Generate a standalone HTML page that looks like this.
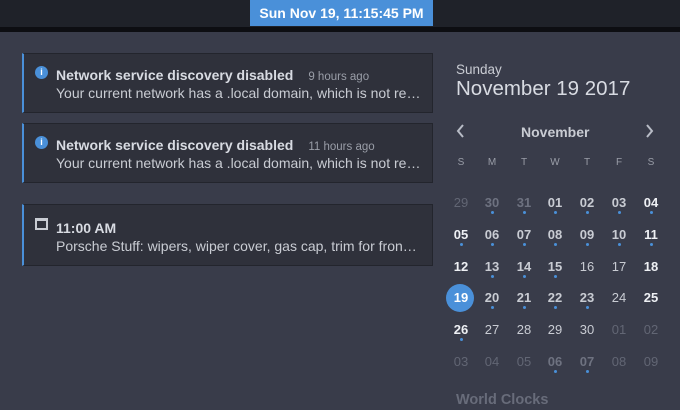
<!DOCTYPE html>
<html><head><style>
*{margin:0;padding:0;box-sizing:border-box}
body{width:680px;height:410px;overflow:hidden;background:#393c4a;font-family:"Liberation Sans",sans-serif;position:relative}
.top{position:absolute;left:0;top:0;width:680px;height:27px;background:#1f2229}
.gap{position:absolute;left:0;top:27px;width:680px;height:5px;background:#0d0e12}
.clock{position:absolute;left:250px;top:0;width:183px;height:26px;background:#4a90d9;color:#fff;font-weight:bold;font-size:14px;text-align:center;line-height:26px}
.card{position:absolute;left:22px;width:411px;background:#2f313b;border:1px solid #23252d;border-left:2px solid #4a90d9}
.card .t{position:absolute;left:32px;top:13px;color:#d8dbe2;font-weight:bold;font-size:14px;white-space:nowrap}
.card .t span{font-weight:normal;color:#9a9ea8;font-size:11.5px;margin-left:15px}
.card .b{position:absolute;left:32px;top:31px;color:#c9ccd3;font-size:14px;white-space:nowrap}
.ic{position:absolute;left:11px;top:12px;width:13px;height:13px;border-radius:50%;background:#4a90d9;color:#fff;font-size:9px;font-weight:bold;text-align:center;line-height:13px}
.cal{position:absolute;left:11px;top:13px;width:13px;height:12px;border:2px solid #c9ccd3;border-top-width:3px}
.c{position:absolute;width:30px;margin-left:-15px;text-align:center;font-size:13px;color:#c9ccd3}
.d{position:absolute;width:3px;height:3px;border-radius:50%;background:#4a90d9;margin-left:-1.5px}
</style></head><body>
<div class="top"></div><div class="gap"></div>
<div class="clock">Sun Nov 19, 11:15:45 PM</div>

<div class="card" style="top:53px;height:60px"><div class="ic">i</div><div class="t">Network service discovery disabled<span>9 hours ago</span></div><div class="b">Your current network has a .local domain, which is not re…</div></div>
<div class="card" style="top:123px;height:60px"><div class="ic">i</div><div class="t">Network service discovery disabled<span>11 hours ago</span></div><div class="b">Your current network has a .local domain, which is not re…</div></div>
<div class="card" style="top:204px;height:62px"><div class="cal"></div><div class="t" style="top:15px">11:00 AM</div><div class="b" style="top:33px">Porsche Stuff: wipers, wiper cover, gas cap, trim for fron…</div></div>

<div style="position:absolute;left:456px;top:62px;color:#c9ccd3;font-size:13.5px">Sunday</div>
<div style="position:absolute;left:456px;top:77px;color:#d8dbe2;font-size:20.5px">November 19 2017</div>
<svg style="position:absolute;left:456px;top:124px" width="10" height="14"><path d="M7 1 L2 7 L7 13" stroke="#b8bcc6" stroke-width="2" fill="none"/></svg>
<svg style="position:absolute;left:645px;top:124px" width="10" height="14"><path d="M2 1 L7 7 L2 13" stroke="#b8bcc6" stroke-width="2" fill="none"/></svg>
<div style="position:absolute;left:521px;top:124px;color:#c9ccd3;font-size:14px;font-weight:bold">November</div>
<div style="position:absolute;left:456px;top:392px;color:#686c7a;font-size:14.5px;font-weight:bold">World Clocks</div>
<div style="position:absolute;left:446px;top:284px;width:28px;height:28px;border-radius:50%;background:#4a90d9"></div>
<div id="g"></div>
<script>
var xs=[461,492,524,555,587,619,651],h='';
"SMTWTFS".split('').forEach(function(s,i){h+='<div class="c" style="left:'+xs[i]+'px;top:157px;font-size:10px;color:#9a9ea8">'+s+'</div>';});
var rows=[["29o","30O","31O","01e","02e","03e","04W"],["05W","06e","07e","08e","09e","10e","11W"],["12w","13e","14e","15e","16n","17n","18w"],["19s","20e","21e","22e","23e","24n","25w"],["26W","27n","28n","29n","30n","01o","02o"],["03o","04o","05o","06O","07O","08o","09o"]];
var ys=[195,227,259,290,322,354];
rows.forEach(function(r,ri){r.forEach(function(c,ci){var n=c.slice(0,2),t=c[2],st='left:'+xs[ci]+'px;top:'+ys[ri]+'px;';
if(t=='o')st+='color:#626674;';if(t=='O')st+='color:#6e7280;font-weight:bold;';
if(t=='e')st+='font-weight:bold;color:#c9ccd3;';if(t=='w'||t=='W')st+='font-weight:bold;color:#eef0f4;';
if(t=='s')st+='font-weight:bold;color:#fff;';
h+='<div class="c" style="'+st+'">'+n+'</div>';
if(t=='O'||t=='e'||t=='W')h+='<div class="d" style="left:'+xs[ci]+'px;top:'+(ys[ri]+16)+'px"></div>';});});
document.getElementById('g').innerHTML=h;
</script>
</body></html>
